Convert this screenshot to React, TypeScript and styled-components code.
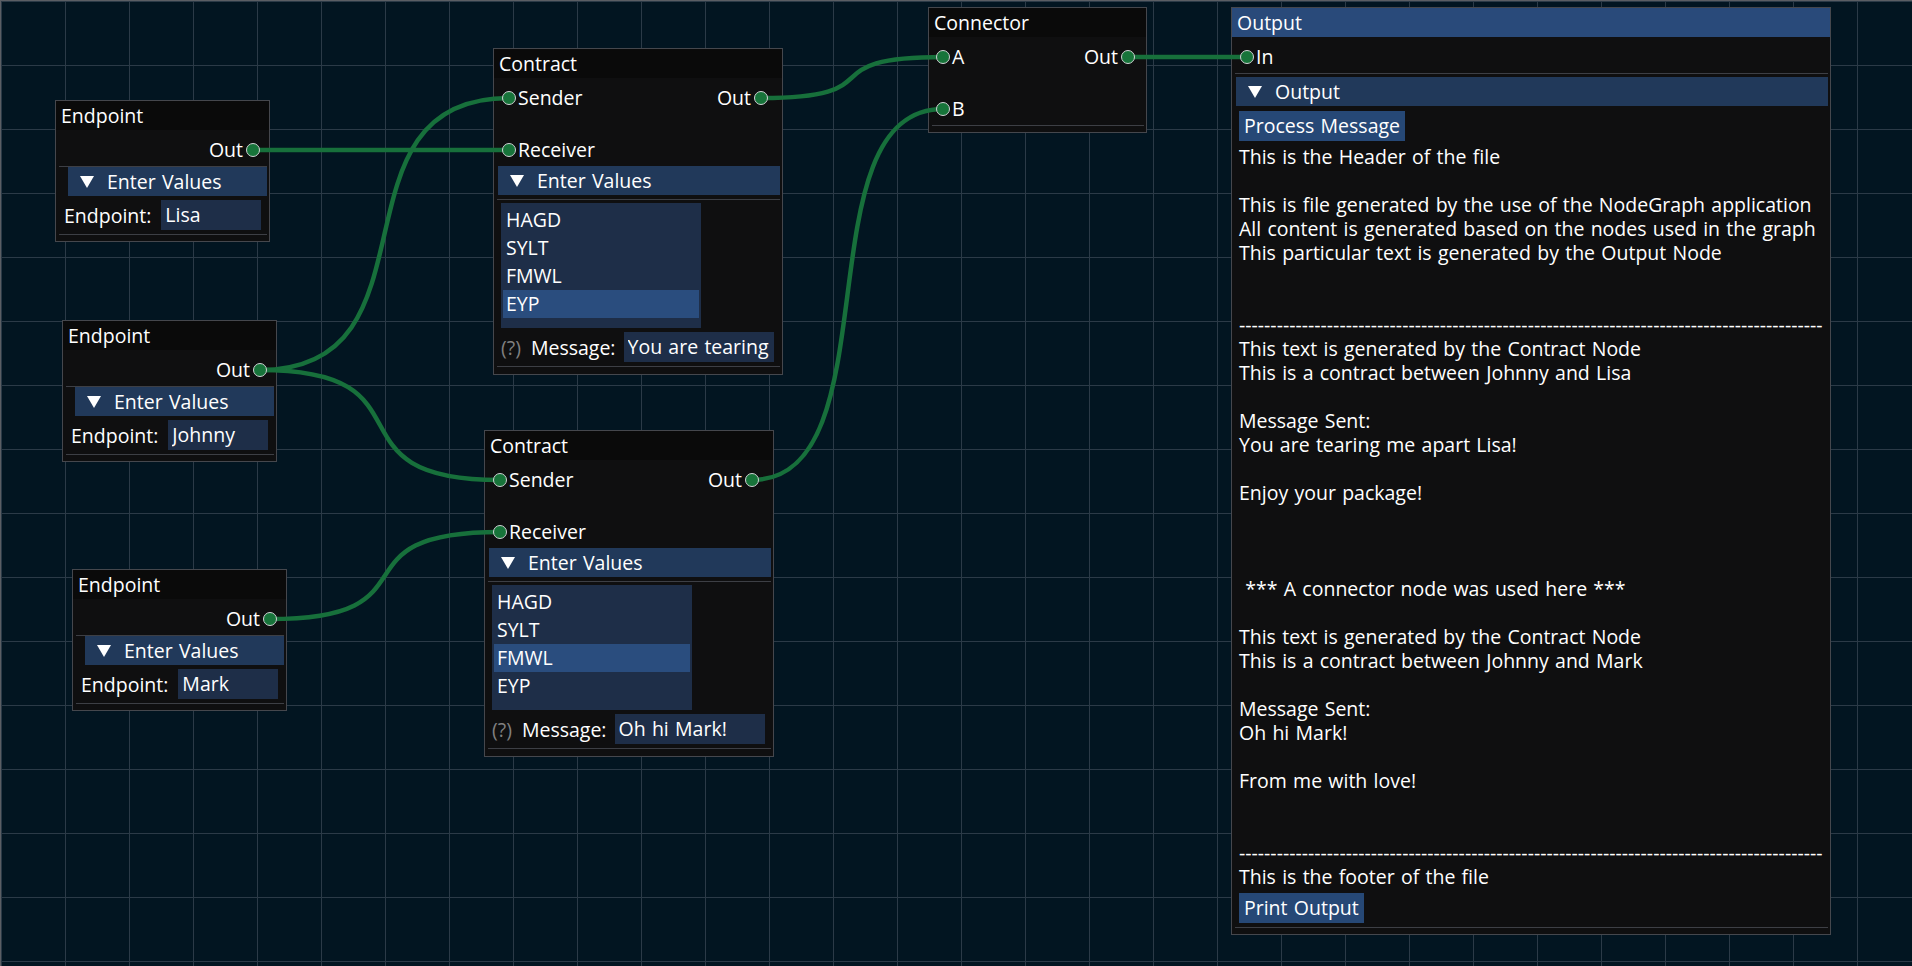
import React, { useLayoutEffect, useRef, useState } from "react";
import styled, { createGlobalStyle } from "styled-components";

const GlobalStyle = createGlobalStyle`
  html, body { margin: 0; padding: 0; background: #021521; }
  body {
    font-family: "Open Sans", "Noto Sans", sans-serif;
    font-size: 19.5px;
    word-spacing: 1.2px;
    color: #ffffff;
  }
  #root { width: 1912px; height: 966px; overflow: hidden; }
`;

const Canvas = styled.div`
  position: relative;
  width: 1912px;
  height: 966px;
  box-sizing: border-box;
  border-left: 1px solid #5b5e64;
  border-top: 1px solid #5b5e64;
  background-color: #021521;
  background-image: linear-gradient(to right, #2b3a47 1px, transparent 1px),
    linear-gradient(to bottom, #2b3a47 1px, transparent 1px);
  background-size: 64px 64px;
  overflow: hidden;
`;

const LinkLayer = styled.svg`
  position: absolute;
  left: 0;
  top: 0;
  width: 100%;
  height: 100%;
  z-index: 2;
  pointer-events: none;
`;

const NodeBox = styled.div<{ $w: number }>`
  position: absolute;
  width: ${(p) => p.$w}px;
  box-sizing: border-box;
  background: #0f0f10;
  border: 1px solid #45474d;
  display: flex;
  flex-direction: column;
`;

const Title = styled.div<{ $active?: boolean }>`
  height: 29px;
  line-height: 29px;
  padding-left: 5px;
  background: ${(p) => (p.$active ? "#294a7a" : "#0a0a0a")};
  white-space: nowrap;
`;

const Body = styled.div<{ $pb: number }>`
  display: flex;
  flex-direction: column;
  padding: 8px 2px ${(p) => p.$pb}px 3px;
`;

const Row = styled.div<{ $mt?: number; $justify?: string; $pl?: number; $pr?: number }>`
  display: flex;
  align-items: center;
  height: 24px;
  line-height: 24px;
  margin-top: ${(p) => p.$mt ?? 0}px;
  justify-content: ${(p) => p.$justify ?? "flex-start"};
  padding-left: ${(p) => p.$pl ?? 0}px;
  padding-right: ${(p) => p.$pr ?? 0}px;
  white-space: nowrap;
`;

const PinDot = styled.span`
  position: relative;
  z-index: 3;
  width: 14px;
  height: 14px;
  box-sizing: border-box;
  border-radius: 50%;
  background: #17743a;
  border: 1px solid #cfd2d4;
  flex-shrink: 0;
`;

const PinLabel = styled.span<{ $side: "in" | "out" }>`
  margin-left: ${(p) => (p.$side === "in" ? 2 : 0)}px;
  margin-right: ${(p) => (p.$side === "out" ? 3 : 0)}px;
`;

const Group = styled.span<{ $ml?: number }>`
  display: flex;
  align-items: center;
  margin-left: ${(p) => p.$ml ?? 0}px;
`;

const Separator = styled.div<{ $mt?: number }>`
  height: 1px;
  background: #3d3f45;
  margin-top: ${(p) => p.$mt ?? 0}px;
`;

const Header = styled.div<{ $indent?: number; $mt?: number }>`
  display: flex;
  align-items: center;
  height: 29px;
  margin-left: ${(p) => p.$indent ?? 0}px;
  margin-top: ${(p) => p.$mt ?? 0}px;
  padding-left: 12px;
  background: #21395a;
  white-space: nowrap;
`;

const HeaderArrow = styled.svg`
  width: 14px;
  height: 12px;
  margin-right: 13px;
  flex-shrink: 0;
`;

const FieldRow = styled.div<{ $mt?: number; $pl?: number }>`
  display: flex;
  align-items: center;
  height: 30px;
  margin-top: ${(p) => p.$mt ?? 0}px;
  padding-left: ${(p) => p.$pl ?? 0}px;
  white-space: nowrap;
`;

const Help = styled.span`
  color: #808080;
  margin-right: 10px;
`;

const Field = styled.div<{ $w: number; $ml: number }>`
  width: ${(p) => p.$w}px;
  height: 30px;
  line-height: 30px;
  margin-left: ${(p) => p.$ml}px;
  box-sizing: border-box;
  padding: 0 4px;
  background: #1e2e48;
  flex-shrink: 0;
`;

const FieldText = styled.div`
  overflow: hidden;
  white-space: nowrap;
`;

const ListBox = styled.div<{ $mt?: number }>`
  display: flex;
  flex-direction: column;
  width: 200px;
  height: 125px;
  margin-top: ${(p) => p.$mt ?? 0}px;
  margin-left: 4px;
  padding: 3px 2px 0 2px;
  box-sizing: border-box;
  background: #1e2e48;
`;

const ListItem = styled.div<{ $selected?: boolean }>`
  height: 28px;
  line-height: 28px;
  padding-left: 3px;
  background: ${(p) => (p.$selected ? "#2a4d7e" : "transparent")};
`;

const Button = styled.div<{ $mt?: number }>`
  align-self: flex-start;
  height: 30px;
  line-height: 30px;
  margin-top: ${(p) => p.$mt ?? 0}px;
  margin-left: 4px;
  padding: 0 5px;
  background: #264876;
  white-space: nowrap;
`;

const OutputText = styled.div<{ $mt?: number }>`
  margin-top: ${(p) => p.$mt ?? 0}px;
  margin-left: 4px;
  line-height: 24px;
  white-space: pre;
`;

const Pin = ({ id }: { id: string }) => <PinDot data-pin={id} />;

const InPin = ({ id, label, ml = 5 }: { id: string; label: string; ml?: number }) => (
  <Group $ml={ml}>
    <Pin id={id} />
    <PinLabel $side="in">{label}</PinLabel>
  </Group>
);

const OutPin = ({ id, label }: { id: string; label: string }) => (
  <Group>
    <PinLabel $side="out">{label}</PinLabel>
    <Pin id={id} />
  </Group>
);

const Arrow = () => (
  <HeaderArrow viewBox="0 0 14 12">
    <polygon points="0,0 14,0 7,12" fill="#ffffff" />
  </HeaderArrow>
);

type Pos = { x: number; y: number };

const EndpointNode = ({ pos, value, pinId }: { pos: Pos; value: string; pinId: string }) => (
  <NodeBox $w={215} style={{ left: pos.x, top: pos.y }}>
    <Title>Endpoint</Title>
    <Body $pb={6}>
      <Row $justify="flex-end" $pr={7}>
        <OutPin id={pinId} label="Out" />
      </Row>
      <Separator $mt={4} />
      <Header $indent={9}>
        <Arrow />
        Enter Values
      </Header>
      <FieldRow $mt={4} $pl={5}>
        <span>Endpoint:</span>
        <Field $w={100} $ml={10}>
          <FieldText>{value}</FieldText>
        </Field>
      </FieldRow>
      <Separator $mt={4} />
    </Body>
  </NodeBox>
);

const CODES = ["HAGD", "SYLT", "FMWL", "EYP"];

const ContractNode = ({
  pos,
  prefix,
  selected,
  message,
}: {
  pos: Pos;
  prefix: string;
  selected: string;
  message: string;
}) => (
  <NodeBox $w={290} style={{ left: pos.x, top: pos.y }}>
    <Title>Contract</Title>
    <Body $pb={7}>
      <Row $justify="space-between" $pr={12}>
        <InPin id={`${prefix}-send`} label="Sender" />
        <OutPin id={`${prefix}-out`} label="Out" />
      </Row>
      <Row $mt={28}>
        <InPin id={`${prefix}-recv`} label="Receiver" />
      </Row>
      <Header $indent={1} $mt={4}>
        <Arrow />
        Enter Values
      </Header>
      <Separator $mt={4} />
      <ListBox $mt={3}>
        {CODES.map((c) => (
          <ListItem key={c} $selected={c === selected}>
            {c}
          </ListItem>
        ))}
      </ListBox>
      <FieldRow $mt={4} $pl={4}>
        <Help>(?)</Help>
        <span>Message:</span>
        <Field $w={150} $ml={8}>
          <FieldText>{message}</FieldText>
        </Field>
      </FieldRow>
      <Separator $mt={4} />
    </Body>
  </NodeBox>
);

const ConnectorNode = ({ pos }: { pos: Pos }) => (
  <NodeBox $w={219} style={{ left: pos.x, top: pos.y }}>
    <Title>Connector</Title>
    <Body $pb={6}>
      <Row $justify="space-between" $pr={9}>
        <InPin id="con-a" label="A" ml={4} />
        <OutPin id="con-out" label="Out" />
      </Row>
      <Row $mt={28}>
        <InPin id="con-b" label="B" ml={4} />
      </Row>
      <Separator $mt={4} />
    </Body>
  </NodeBox>
);

const dashes = "-".repeat(93);

const OUTPUT_LINES = [
  "This is the Header of the file",
  "",
  "This is file generated by the use of the NodeGraph application",
  "All content is generated based on the nodes used in the graph",
  "This particular text is generated by the Output Node",
  "",
  "",
  dashes,
  "This text is generated by the Contract Node",
  "This is a contract between Johnny and Lisa",
  "",
  "Message Sent:",
  "You are tearing me apart Lisa!",
  "",
  "Enjoy your package!",
  "",
  "",
  "",
  " *** A connector node was used here ***",
  "",
  "This text is generated by the Contract Node",
  "This is a contract between Johnny and Mark",
  "",
  "Message Sent:",
  "Oh hi Mark!",
  "",
  "From me with love!",
  "",
  "",
  dashes,
  "This is the footer of the file",
].join("\n");

const OutputNode = ({ pos }: { pos: Pos }) => (
  <NodeBox $w={600} style={{ left: pos.x, top: pos.y }}>
    <Title $active>Output</Title>
    <Body $pb={6}>
      <Row>
        <InPin id="out-in" label="In" />
      </Row>
      <Separator $mt={4} />
      <Header $indent={1} $mt={3}>
        <Arrow />
        Output
      </Header>
      <Button $mt={5}>Process Message</Button>
      <OutputText $mt={4}>{OUTPUT_LINES}</OutputText>
      <Button $mt={4}>Print Output</Button>
      <Separator $mt={4} />
    </Body>
  </NodeBox>
);

const LINKS: [string, string][] = [
  ["e1-out", "c1-recv"],
  ["e2-out", "c1-send"],
  ["e2-out", "c2-send"],
  ["e3-out", "c2-recv"],
  ["c1-out", "con-a"],
  ["c2-out", "con-b"],
  ["con-out", "out-in"],
];

export default function App() {
  const canvasRef = useRef<HTMLDivElement>(null);
  const [paths, setPaths] = useState<string[]>([]);

  useLayoutEffect(() => {
    const measure = () => {
      const c = canvasRef.current;
      if (!c) return;
      const cr = c.getBoundingClientRect();
      const pos: Record<string, Pos> = {};
      c.querySelectorAll<HTMLElement>("[data-pin]").forEach((el) => {
        const r = el.getBoundingClientRect();
        pos[el.dataset.pin as string] = {
          x: r.left + r.width / 2 - cr.left - c.clientLeft,
          y: r.top + r.height / 2 - cr.top - c.clientTop,
        };
      });
      setPaths(
        LINKS.map(([a, b]) => {
          const p = pos[a];
          const q = pos[b];
          if (!p || !q) return "";
          const k = Math.abs(q.x - p.x) * 0.75;
          return `M${p.x} ${p.y} C${p.x + k} ${p.y} ${q.x - k} ${q.y} ${q.x} ${q.y}`;
        })
      );
    };
    measure();
    if (document.fonts && document.fonts.ready) document.fonts.ready.then(measure);
  }, []);

  return (
    <>
      <GlobalStyle />
      <Canvas ref={canvasRef}>
        <EndpointNode pos={{ x: 54, y: 99 }} value="Lisa" pinId="e1-out" />
        <EndpointNode pos={{ x: 61, y: 319 }} value="Johnny" pinId="e2-out" />
        <EndpointNode pos={{ x: 71, y: 568 }} value="Mark" pinId="e3-out" />
        <ContractNode
          pos={{ x: 492, y: 47 }}
          prefix="c1"
          selected="EYP"
          message="You are tearing me apart Lisa!"
        />
        <ContractNode pos={{ x: 483, y: 429 }} prefix="c2" selected="FMWL" message="Oh hi Mark!" />
        <ConnectorNode pos={{ x: 927, y: 6 }} />
        <OutputNode pos={{ x: 1230, y: 6 }} />
        <LinkLayer>
          {paths.map((d, i) => (
            <path key={i} d={d} fill="none" stroke="#17703b" strokeWidth={4.5} />
          ))}
        </LinkLayer>
      </Canvas>
    </>
  );
}
